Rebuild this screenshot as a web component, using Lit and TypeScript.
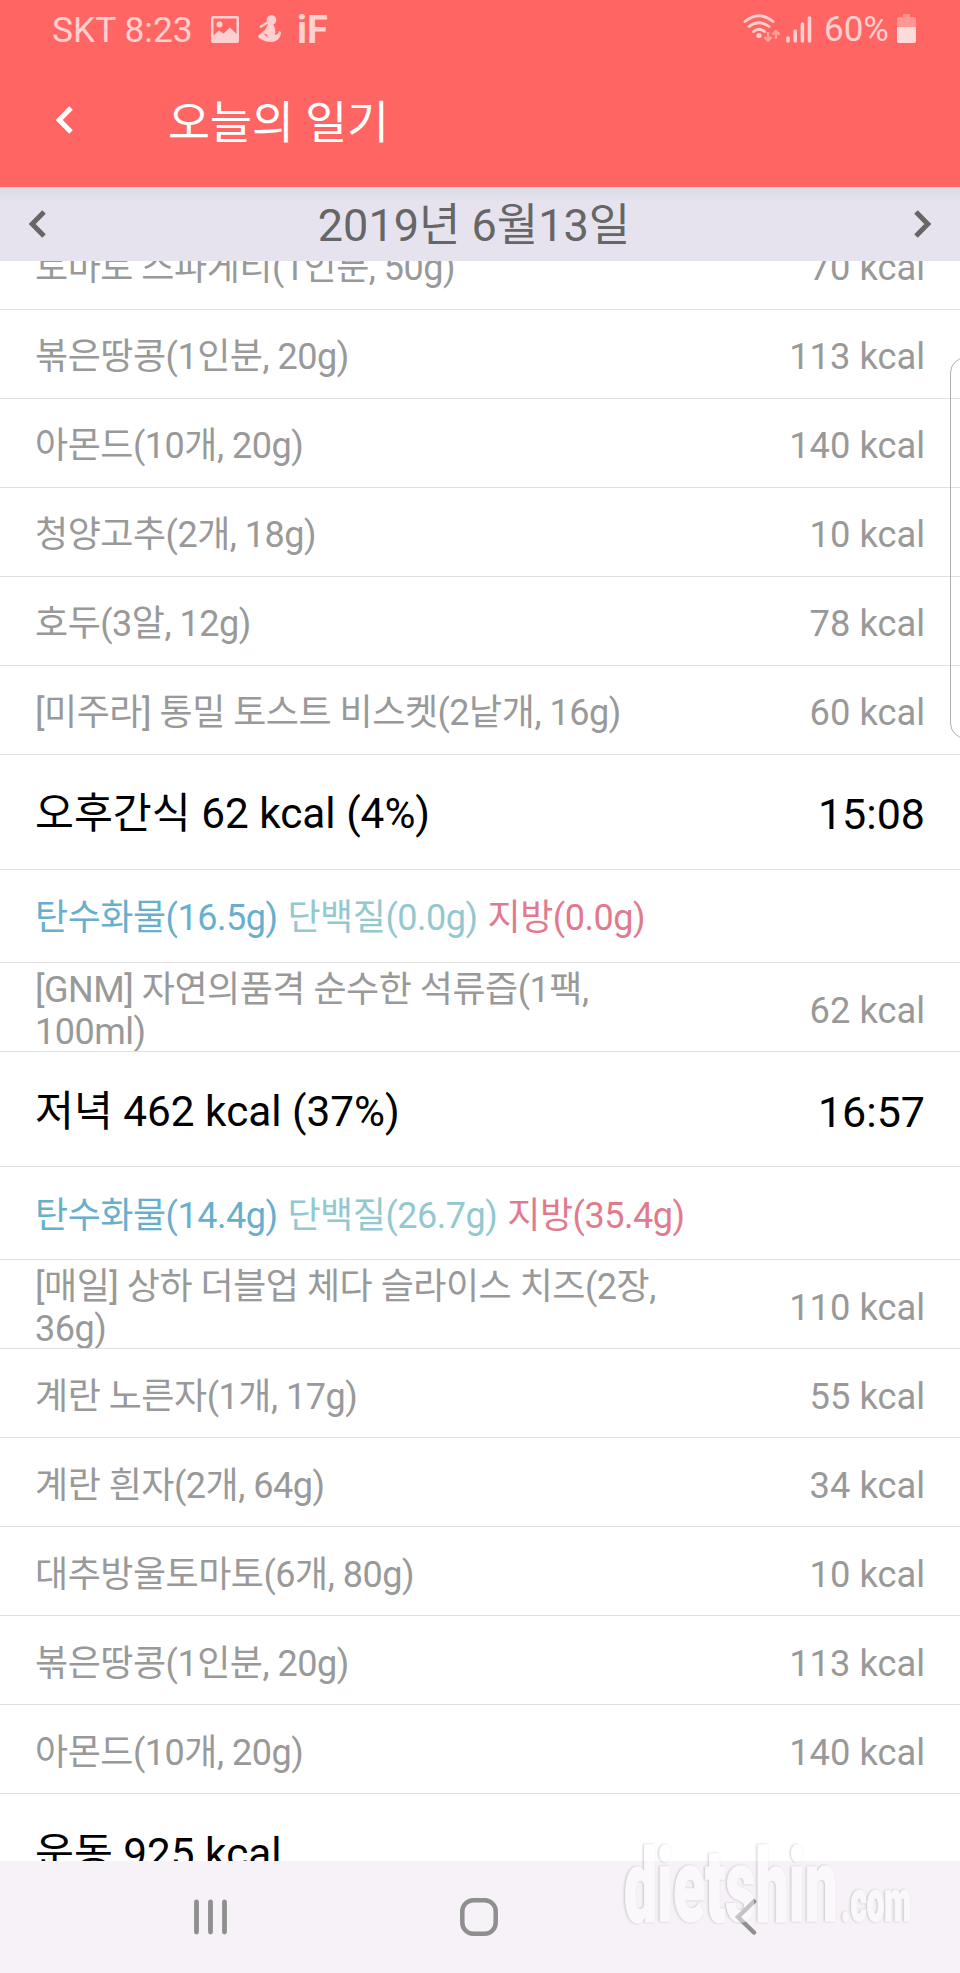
import { LitElement, html, css } from "lit";
import { customElement, property } from "lit/decorators.js";

type Entry =
  | { kind: "food"; name: string; kcal: string }
  | { kind: "meal"; name: string; time: string }
  | { kind: "macros"; carbs: string; protein: string; fat: string };

const entries: Entry[] = [
  { kind: "food", name: "토마토 스파게티(1인분, 50g)", kcal: "70 kcal" },
  { kind: "food", name: "볶은땅콩(1인분, 20g)", kcal: "113 kcal" },
  { kind: "food", name: "아몬드(10개, 20g)", kcal: "140 kcal" },
  { kind: "food", name: "청양고추(2개, 18g)", kcal: "10 kcal" },
  { kind: "food", name: "호두(3알, 12g)", kcal: "78 kcal" },
  { kind: "food", name: "[미주라] 통밀 토스트 비스켓(2낱개, 16g)", kcal: "60 kcal" },
  { kind: "meal", name: "오후간식 62 kcal (4%)", time: "15:08" },
  { kind: "macros", carbs: "16.5g", protein: "0.0g", fat: "0.0g" },
  { kind: "food", name: "[GNM] 자연의품격 순수한 석류즙(1팩, 100ml)", kcal: "62 kcal" },
  { kind: "meal", name: "저녁 462 kcal (37%)", time: "16:57" },
  { kind: "macros", carbs: "14.4g", protein: "26.7g", fat: "35.4g" },
  { kind: "food", name: "[매일] 상하 더블업 체다 슬라이스 치즈(2장, 36g)", kcal: "110 kcal" },
  { kind: "food", name: "계란 노른자(1개, 17g)", kcal: "55 kcal" },
  { kind: "food", name: "계란 흰자(2개, 64g)", kcal: "34 kcal" },
  { kind: "food", name: "대추방울토마토(6개, 80g)", kcal: "10 kcal" },
  { kind: "food", name: "볶은땅콩(1인분, 20g)", kcal: "113 kcal" },
  { kind: "food", name: "아몬드(10개, 20g)", kcal: "140 kcal" },
  { kind: "meal", name: "운동 925 kcal", time: "" },
];

@customElement("diary-row")
class DiaryRow extends LitElement {
  @property({ attribute: false }) entry!: Entry;

  static styles = css`
    :host { display: block; flex: none; }
    .row {
      box-sizing: border-box;
      display: flex;
      justify-content: space-between;
      align-items: center;
      padding: 7px 35px 0 35px;
      border-bottom: 1px solid #e0e0e0;
      overflow: hidden;
      color: #999;
      font-size: 36px;
      line-height: 42px;
      letter-spacing: -0.48px;
    }
    .food { height: 88.96px; }
    .meal {
      height: 115.1px;
      padding-top: 5px;
      color: #000;
      font-size: 42.3px;
      letter-spacing: 0;
    }
    .macros { height: 93.3px; padding-top: 5px; justify-content: flex-start; gap: 10px; }
    .name { max-width: 640px; word-break: keep-all; }
    .value { flex: none; font-size: 36.3px; letter-spacing: 0; }
    .meal .value { font-size: 43px; }
    .carbs { color: #68afcc; }
    .protein { color: #93c8cf; }
    .fat { color: #e27a8d; }
  `;

  render() {
    const e = this.entry;
    if (e.kind === "macros") {
      return html`<div class="row macros">
        <span class="carbs">${`탄수화물(${e.carbs})`}</span>
        <span class="protein">${`단백질(${e.protein})`}</span>
        <span class="fat">${`지방(${e.fat})`}</span>
      </div>`;
    }
    const value = e.kind === "food" ? e.kcal : e.time;
    return html`<div class="row ${e.kind}">
      <span class="name">${e.name}</span><span class="value">${value}</span>
    </div>`;
  }
}

const chevron = (flip = false) => html`<svg width="18" height="28" viewBox="0 0 18 28">
  <path d=${flip ? "M2 2 13.8 14 2 26" : "M16 2 4.2 14 16 26"} fill="none" stroke="currentColor" stroke-width="5" />
</svg>`;

@customElement("app-root")
class AppRoot extends LitElement {
  static styles = css`
    :host {
      display: flex;
      flex-direction: column;
      position: relative;
      width: 960px;
      height: 1973px;
      overflow: hidden;
      background: #fff;
      font-family: Roboto, "Noto Sans CJK KR", sans-serif;
    }
    svg { display: block; flex: none; }
    .top { flex: none; height: 187px; background: #ff6663; }
    .status {
      display: flex;
      align-items: center;
      height: 58px;
      padding: 0 43px 0 52px;
      box-sizing: border-box;
      color: #ffd0cf;
      font-size: 35.4px;
      line-height: 40px;
    }
    .clock { width: 159px; padding-top: 2px; white-space: nowrap; }
    .person { margin-left: 18px; }
    .brand { margin-left: 14px; padding-top: 1px; font-size: 38px; font-weight: 700; }
    .grow { flex: 1; }
    .bars { margin-left: 5px; }
    .percent { margin: 0 8px 0 12px; padding-top: 2px; font-size: 35px; }
    .title {
      display: flex;
      align-items: center;
      height: 129px;
      box-sizing: border-box;
      padding: 0 0 5px 55px;
      color: #fff;
      font-size: 45.6px;
      line-height: 56px;
    }
    .title span { margin-left: 95px; padding-top: 7px; }
    .date {
      flex: none;
      display: flex;
      align-items: center;
      justify-content: space-between;
      height: 74px;
      box-sizing: border-box;
      padding: 0 28px;
      background: linear-gradient(#dadde5, #dfe0e9 8px, #e6e3ee 14px);
      color: #666;
      font-size: 45px;
      line-height: 56px;
    }
    .day { padding: 4px 12px 0 0; }
    .list {
      flex: 1;
      min-height: 0;
      display: flex;
      flex-direction: column;
      justify-content: flex-start;
      overflow: hidden;
    }
    .list diary-row:first-child { margin-top: -40px; }
    .nav {
      flex: none;
      display: flex;
      align-items: center;
      height: 112px;
      background: #f7f2f7;
      color: #8f8f8f;
    }
    .recents { margin-left: 193px; }
    .home { margin-left: 232px; }
    .back { margin-left: 236px; }
    .edge {
      position: absolute;
      left: 950px;
      top: 357px;
      width: 30px;
      height: 380px;
      border: 1.5px solid #b0b0b0;
      border-radius: 16px;
    }
    .mark { position: absolute; left: 615px; top: 1810px; }
    .mark text {
      font-family: Roboto, sans-serif;
      font-weight: 900;
      fill: #fff;
      stroke: #fff;
      stroke-width: 1.5px;
      opacity: 0.48;
      filter: drop-shadow(-1px 0.5px 1.2px rgba(90, 82, 98, 0.6));
    }
  `;

  render() {
    return html`
      <header class="top">
        <div class="status">
          <span class="clock">SKT 8:23</span>
          <svg width="28" height="27" viewBox="0 0 28 27">
            <path fill="currentColor" fill-rule="evenodd" d="M2 0h24a2 2 0 0 1 2 2v23a2 2 0 0 1-2 2H2a2 2 0 0 1-2-2V2a2 2 0 0 1 2-2ZM2.5 2.5v17l5.5-5 4.5 3 6.5-6 6.5 6.5V2.5Z" />
            <circle cx="8.5" cy="8.5" r="3" fill="currentColor" />
          </svg>
          <svg class="person" width="26" height="28" viewBox="0 0 26 28">
            <circle cx="14.5" cy="5" r="4.8" fill="currentColor" />
            <path d="M4 11.5 11.500 7" stroke="currentColor" stroke-width="2.6" stroke-linecap="round" />
            <path fill="currentColor" d="M11 9 8 15l-7 6 1 2c5 3 8 4 13 4 6-1 9-5 9-10l-2-1c-1 3-2 4-4 4 1-4 0-8-2-11Z" />
            <path d="m6.5 18.500 3.500 1 1 3.500Z" fill="#ff6663" />
          </svg>
          <span class="brand">iF</span>
          <span class="grow"></span>
          <svg width="38" height="30" viewBox="0 0 38 30">
            <g fill="none" stroke="currentColor" stroke-width="2.8" stroke-linecap="round">
              <path d="M2 7.5Q16-4 30 7.5" /><path d="M6 12.5Q16 5 26 12.5" /><path d="M10.5 17.5Q16 13 21.500 17.500" />
            </g>
            <circle cx="16" cy="21.5" r="2.6" fill="currentColor" />
            <g fill="none" stroke="#ffa29c" stroke-width="2.4">
              <path d="M25 18v8M21.500 23 25 26.500l3.500-3.500M33 25v-8M29.500 20.500 33 17l3.500 3.500" />
            </g>
          </svg>
          <svg class="bars" width="26" height="27" viewBox="0 0 26 27">
            <g stroke="currentColor" stroke-width="3.6" stroke-linecap="round">
              <path d="M2 22v3M9.200 15v10M16.400 8v17M23.500 2v23" />
            </g>
          </svg>
          <span class="percent">60%</span>
          <svg width="20" height="30" viewBox="0 0 20 30">
            <path d="M6 0h7v3h4a2 2 0 0 1 2 2v8H0V5a2 2 0 0 1 2-2h4Z" fill="#ff9694" />
            <path d="M0 13h19v14a2 2 0 0 1-2 2H2a2 2 0 0 1-2-2Z" fill="#ffdada" />
          </svg>
        </div>
        <div class="title">${chevron()}<span>오늘의 일기</span></div>
      </header>
      <div class="date">${chevron()}<span class="day">2019년 6월13일</span>${chevron(true)}</div>
      <main class="list">
        ${entries.map((e) => html`<diary-row .entry=${e}></diary-row>`)}
      </main>
      <footer class="nav">
        <svg class="recents" width="35" height="36" viewBox="0 0 35 36">
          <path d="M3.500 3v30M17.500 3v30M31.500 3v30" stroke="currentColor" stroke-width="4.8" stroke-linecap="round" />
        </svg>
        <svg class="home" width="38" height="38" viewBox="0 0 38 38">
          <rect x="2.3" y="2.3" width="33.4" height="33.4" rx="11" fill="none" stroke="currentColor" stroke-width="4.5" />
        </svg>
        <svg class="back" width="24" height="36" viewBox="0 0 24 36">
          <path d="M20 2.500 4 18l16 15.500" fill="none" stroke="currentColor" stroke-width="4.5" stroke-linecap="round" />
        </svg>
      </footer>
      <div class="edge"></div>
      <svg class="mark" width="320" height="150" viewBox="0 0 320 150">
        <text x="9" y="111" font-size="102" textLength="214" lengthAdjust="spacingAndGlyphs">dietshin</text>
        <text x="226" y="111" font-size="57" textLength="70" lengthAdjust="spacingAndGlyphs">.com</text>
      </svg>
    `;
  }
}
